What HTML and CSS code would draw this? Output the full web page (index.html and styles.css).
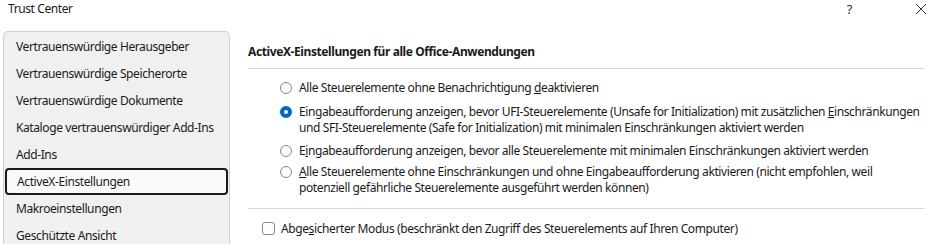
FILE: index.html
```html
<!DOCTYPE html>
<html lang="de">
<head>
<meta charset="utf-8">
<title>Trust Center</title>
<link rel="stylesheet" href="styles.css">
</head>
<body>
<div class="window">
  <div class="titlebar">
    <span class="title">Trust Center</span>
    <div class="controls">
      <span class="help">?</span>
      <svg class="close" width="12" height="12" viewBox="0 0 12 12"><path d="M1 1L11 11M11 1L1 11" stroke="#333" stroke-width="1" fill="none"/></svg>
    </div>
  </div>
  <div class="main">
    <nav class="sidebar">
      <div class="item">Vertrauenswürdige Herausgeber</div>
      <div class="item">Vertrauenswürdige Speicherorte</div>
      <div class="item">Vertrauenswürdige Dokumente</div>
      <div class="item">Kataloge vertrauenswürdiger Add-Ins</div>
      <div class="item">Add-Ins</div>
      <div class="item selected">ActiveX-Einstellungen</div>
      <div class="item">Makroeinstellungen</div>
      <div class="item">Geschützte Ansicht</div>
    </nav>
    <section class="content">
      <h2 class="heading">ActiveX-Einstellungen für alle Office-Anwendungen</h2>
      <div class="options">
        <div class="opt r1"><span class="radio"></span><span class="label">Alle Steuerelemente ohne Benachrichtigung <u>d</u>eaktivieren</span></div>
        <div class="opt r2"><span class="radio checked"></span><span class="label">Eingabeaufforderung anzeigen, bevor UFI-Steuerelemente (Unsafe for Initialization) mit zusätzlichen <u>E</u>inschränkungen<br>und SFI-Steuerelemente (Safe for Initialization) mit minimalen Einschränkungen aktiviert werden</span></div>
        <div class="opt r3"><span class="radio"></span><span class="label">E<u>i</u>ngabeaufforderung anzeigen, bevor alle Steuerelemente mit minimalen Einschränkungen aktiviert werden</span></div>
        <div class="opt r4"><span class="radio"></span><span class="label"><u>A</u>lle Steuerelemente ohne Einschränkungen und ohne Eingabeaufforderung aktivieren (nicht empfohlen, weil<br>potenziell gefährliche Steuerelemente ausgeführt werden können)</span></div>
      </div>
      <div class="check"><span class="box"></span><span class="label">Abge<u>s</u>icherter Modus (beschränkt den Zugriff des Steuerelements auf Ihren Computer)</span></div>
    </section>
  </div>
</div>
</body>
</html>
```
FILE: styles.css
```css
html, body {
  margin: 0;
  padding: 0;
  background: #ffffff;
}
body {
  width: 937px;
  height: 244px;
  overflow: hidden;
  font-family: "Noto Sans", "Segoe UI", sans-serif;
  font-size: 12px;
  letter-spacing: -0.4px;
  color: #1a1a1a;
}
.window {
  width: 937px;
  height: 244px;
  overflow: hidden;
}
.titlebar {
  height: 31px;
  display: flex;
  justify-content: space-between;
  align-items: flex-start;
}
.title {
  margin-left: 8px;
  margin-top: 1px;
  line-height: 16px;
}
.controls {
  display: flex;
  align-items: center;
  margin-top: 2px;
  margin-right: 10px;
}
.help {
  font-size: 13px;
  line-height: 14px;
  margin-right: 63px;
  color: #333;
}
.close {
  display: block;
}
.main {
  display: flex;
  align-items: flex-start;
}
.sidebar {
  margin-left: 3px;
  width: 227px;
  height: 240px;
  border: 1px solid #cfcfcf;
  border-bottom: none;
  border-radius: 5px 5px 0 0;
  background: #f0f0f0;
  padding-top: 1px;
  box-sizing: border-box;
}
.item {
  height: 27px;
  line-height: 27px;
  padding-left: 12px;
  white-space: nowrap;
}
.item.selected {
  margin: 0 1px;
  padding-left: 10px;
  border: 2px solid #1a1a1a;
  border-radius: 4px;
  background: #fafafa;
  line-height: 23px;
  height: 27px;
  box-sizing: border-box;
}
.content {
  margin-left: 18px;
  width: 677px;
  padding-top: 13px;
}
.heading {
  margin: 0;
  font-size: 12px;
  font-weight: bold;
  line-height: 16px;
  padding-bottom: 8px;
  border-bottom: 1px solid #d9d9d9;
}
.options {
  padding-top: 11px;
  padding-left: 32px;
  padding-bottom: 12px;
  border-bottom: 1px solid #d9d9d9;
}
.opt {
  display: flex;
  align-items: flex-start;
  line-height: 16px;
  white-space: nowrap;
}
.r2 { margin-top: 8px; }
.r3 { margin-top: 7px; }
.r4 { margin-top: 5px; }
.radio {
  flex: none;
  width: 12px;
  height: 12px;
  margin-top: 2px;
  margin-right: 7px;
  border: 1px solid #8a8a8a;
  border-radius: 50%;
  box-sizing: border-box;
  background: #fbfbfb;
}
.radio.checked {
  border: 4px solid #0067c0;
  background: #ffffff;
}
.label u {
  text-decoration: underline;
}
.check {
  display: flex;
  align-items: flex-start;
  line-height: 16px;
  margin-top: 12px;
  padding-left: 14px;
  white-space: nowrap;
}
.box {
  flex: none;
  width: 13px;
  height: 13px;
  margin-top: 1px;
  margin-right: 6px;
  border: 1px solid #8a8a8a;
  border-radius: 3px;
  box-sizing: border-box;
  background: #fdfdfd;
}
```
